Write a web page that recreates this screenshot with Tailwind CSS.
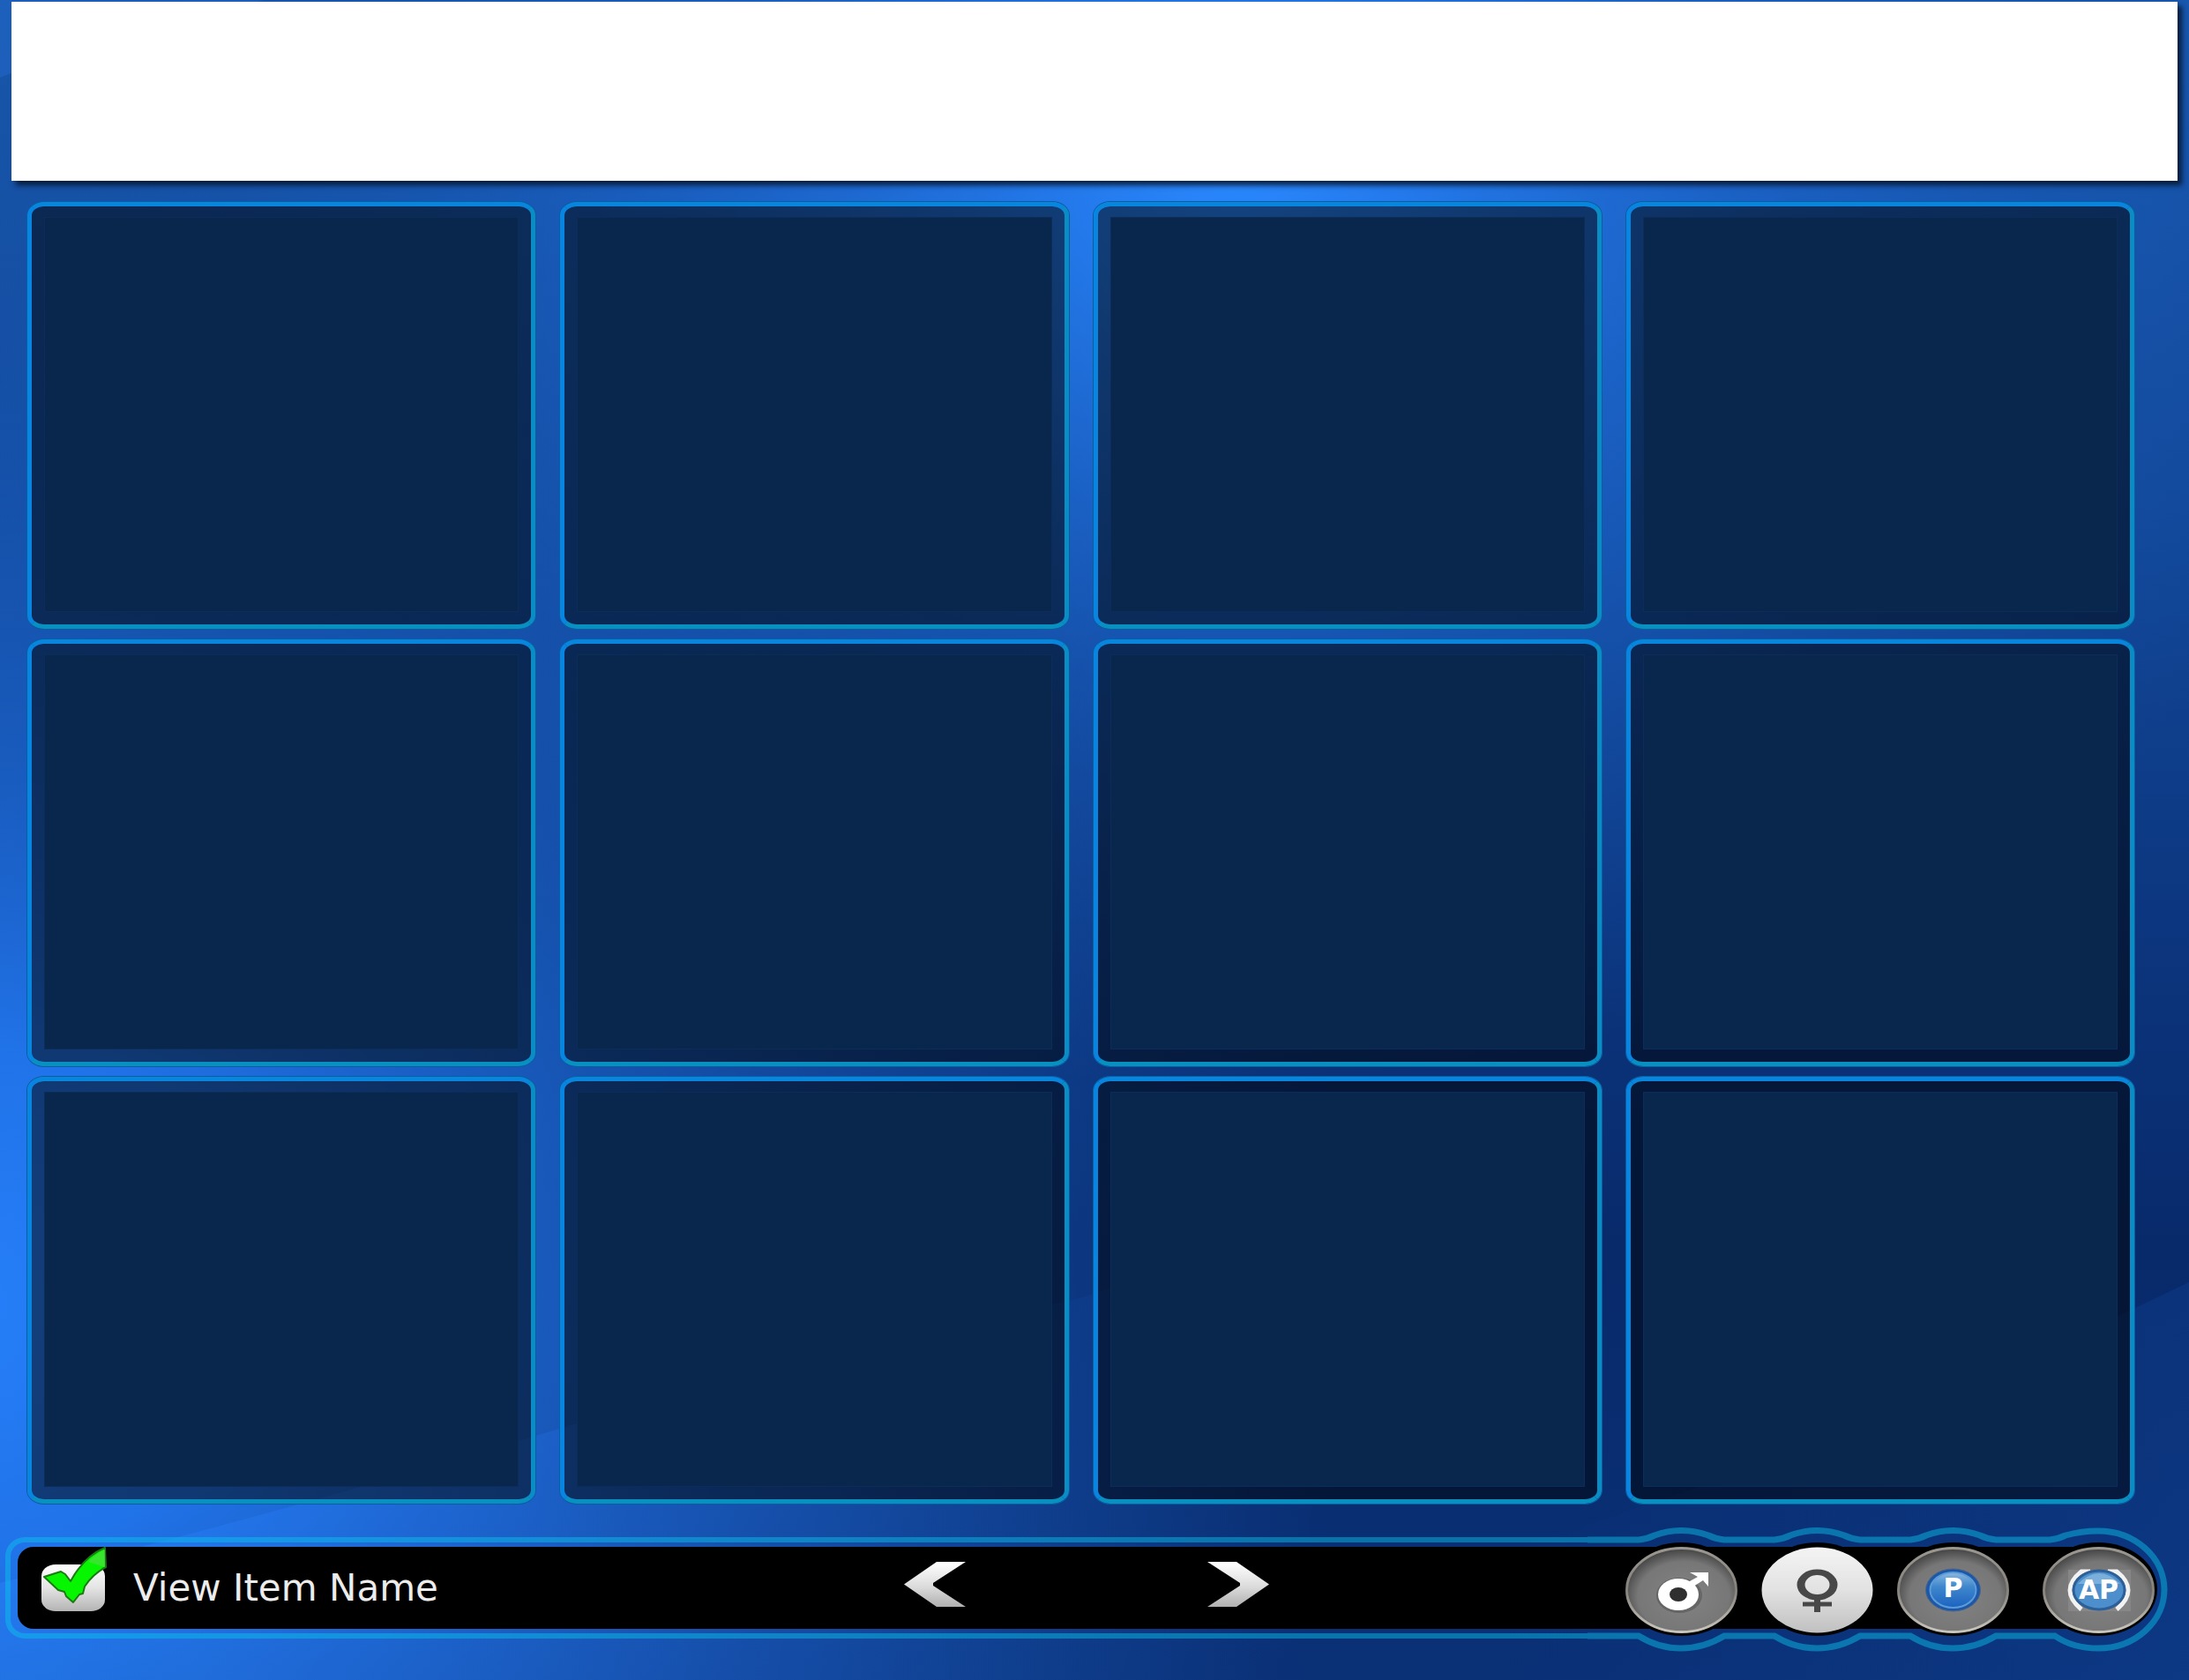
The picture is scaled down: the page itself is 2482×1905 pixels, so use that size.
<!DOCTYPE html>
<html lang="en">
<head>
<meta charset="utf-8">
<title>Item Browser</title>
<script src="https://cdn.jsdelivr.net/npm/@tailwindcss/browser@4"></script>
</head>
<body class="relative isolate flex min-h-screen flex-col overflow-x-hidden bg-[#0a3078] font-['DejaVu_Sans',Verdana,sans-serif]">

<!-- Blue swoosh backdrop -->
<svg class="absolute inset-0 -z-10 h-full w-full" viewBox="0 0 2482 1905" preserveAspectRatio="none" aria-hidden="true">
  <defs>
    <radialGradient id="glowTop" gradientUnits="userSpaceOnUse" cx="0" cy="0" r="1" gradientTransform="translate(1400 180) scale(1350 1050)">
      <stop offset="0" stop-color="#2a8aff"/><stop offset=".15" stop-color="#257df2" stop-opacity=".9"/><stop offset=".5" stop-color="#1c66d0" stop-opacity=".55"/><stop offset="1" stop-color="#1552ac" stop-opacity="0"/>
    </radialGradient>
    <radialGradient id="glowLeft" gradientUnits="userSpaceOnUse" cx="0" cy="0" r="1" gradientTransform="translate(-60 1480) scale(1600 1350)">
      <stop offset="0" stop-color="#2680fa"/><stop offset=".22" stop-color="#2276ee" stop-opacity=".95"/><stop offset=".5" stop-color="#1c66d0" stop-opacity=".65"/><stop offset="1" stop-color="#1552ac" stop-opacity="0"/>
    </radialGradient>
    <linearGradient id="base" x1="0" y1="0" x2="0" y2="1">
      <stop offset="0" stop-color="#1857ac"/><stop offset=".3" stop-color="#124899"/><stop offset=".55" stop-color="#0c367f"/><stop offset=".74" stop-color="#082a6b"/><stop offset="1" stop-color="#0a3076"/>
    </linearGradient>
    <linearGradient id="swoosh" gradientUnits="userSpaceOnUse" x1="0" y1="0" x2="1500" y2="0">
      <stop offset="0" stop-color="#2a86ff" stop-opacity=".4"/><stop offset=".5" stop-color="#2a7cff" stop-opacity=".16"/><stop offset="1" stop-color="#2a7cff" stop-opacity="0"/>
    </linearGradient>
    <linearGradient id="swooshRight" gradientUnits="userSpaceOnUse" x1="1700" y1="0" x2="2482" y2="0">
      <stop offset="0" stop-color="#1a60c8" stop-opacity="0"/><stop offset="1" stop-color="#1a60c8" stop-opacity=".16"/>
    </linearGradient>
  </defs>
  <rect width="2482" height="1905" fill="url(#base)"/>
  <rect width="2482" height="1905" fill="url(#glowTop)"/>
  <rect width="2482" height="1905" fill="url(#glowLeft)"/>
  <path d="M0 0H300Q120 40 0 88Z" fill="#2a78e0" fill-opacity=".3"/>
  <path d="M0 1795Q320 1715 611 1627T1225 1472L1500 1380V1905H0Z" fill="url(#swoosh)"/>
  <path d="M1700 1905V1760Q2100 1640 2482 1454V1905Z" fill="url(#swooshRight)"/>
</svg>

<header class="mx-[13px] mt-0.5 h-[203px] bg-white shadow-[5px_5px_6px_rgba(6,22,48,0.9)]"></header>

<main class="mt-[23px] grid flex-1 grid-cols-4 grid-rows-3 gap-x-[26px] gap-y-[10px] pr-[61px] pl-[30px]">
  <article class="min-h-60 rounded-[20px/16px] border border-[#0a5ea0]"><div class="h-full rounded-[19px/15px] border-[5px] border-t-[#0885dc] border-r-[#0a8cc4] border-b-[#0890c0] border-l-[#0885e0] bg-black/50 bg-clip-padding px-[14px] pt-3 pb-[14px]"><div class="h-full border border-[#0c2d59] bg-[#09264d]"></div></div></article>
  <article class="min-h-60 rounded-[20px/16px] border border-[#0a5ea0]"><div class="h-full rounded-[19px/15px] border-[5px] border-t-[#0885dc] border-r-[#0a8cc4] border-b-[#0890c0] border-l-[#0885e0] bg-black/50 bg-clip-padding px-[14px] pt-3 pb-[14px]"><div class="h-full border border-[#0c2d59] bg-[#09264d]"></div></div></article>
  <article class="min-h-60 rounded-[20px/16px] border border-[#0a5ea0]"><div class="h-full rounded-[19px/15px] border-[5px] border-t-[#0885dc] border-r-[#0a8cc4] border-b-[#0890c0] border-l-[#0885e0] bg-black/50 bg-clip-padding px-[14px] pt-3 pb-[14px]"><div class="h-full border border-[#0c2d59] bg-[#09264d]"></div></div></article>
  <article class="min-h-60 rounded-[20px/16px] border border-[#0a5ea0]"><div class="h-full rounded-[19px/15px] border-[5px] border-t-[#0885dc] border-r-[#0a8cc4] border-b-[#0890c0] border-l-[#0885e0] bg-black/50 bg-clip-padding px-[14px] pt-3 pb-[14px]"><div class="h-full border border-[#0c2d59] bg-[#09264d]"></div></div></article>
  <article class="min-h-60 rounded-[20px/16px] border border-[#0a5ea0]"><div class="h-full rounded-[19px/15px] border-[5px] border-t-[#0885dc] border-r-[#0a8cc4] border-b-[#0890c0] border-l-[#0885e0] bg-black/50 bg-clip-padding px-[14px] pt-3 pb-[14px]"><div class="h-full border border-[#0c2d59] bg-[#09264d]"></div></div></article>
  <article class="min-h-60 rounded-[20px/16px] border border-[#0a5ea0]"><div class="h-full rounded-[19px/15px] border-[5px] border-t-[#0885dc] border-r-[#0a8cc4] border-b-[#0890c0] border-l-[#0885e0] bg-black/50 bg-clip-padding px-[14px] pt-3 pb-[14px]"><div class="h-full border border-[#0c2d59] bg-[#09264d]"></div></div></article>
  <article class="min-h-60 rounded-[20px/16px] border border-[#0a5ea0]"><div class="h-full rounded-[19px/15px] border-[5px] border-t-[#0885dc] border-r-[#0a8cc4] border-b-[#0890c0] border-l-[#0885e0] bg-black/50 bg-clip-padding px-[14px] pt-3 pb-[14px]"><div class="h-full border border-[#0c2d59] bg-[#09264d]"></div></div></article>
  <article class="min-h-60 rounded-[20px/16px] border border-[#0a5ea0]"><div class="h-full rounded-[19px/15px] border-[5px] border-t-[#0885dc] border-r-[#0a8cc4] border-b-[#0890c0] border-l-[#0885e0] bg-black/50 bg-clip-padding px-[14px] pt-3 pb-[14px]"><div class="h-full border border-[#0c2d59] bg-[#09264d]"></div></div></article>
  <article class="min-h-60 rounded-[20px/16px] border border-[#0a5ea0]"><div class="h-full rounded-[19px/15px] border-[5px] border-t-[#0885dc] border-r-[#0a8cc4] border-b-[#0890c0] border-l-[#0885e0] bg-black/50 bg-clip-padding px-[14px] pt-3 pb-[14px]"><div class="h-full border border-[#0c2d59] bg-[#09264d]"></div></div></article>
  <article class="min-h-60 rounded-[20px/16px] border border-[#0a5ea0]"><div class="h-full rounded-[19px/15px] border-[5px] border-t-[#0885dc] border-r-[#0a8cc4] border-b-[#0890c0] border-l-[#0885e0] bg-black/50 bg-clip-padding px-[14px] pt-3 pb-[14px]"><div class="h-full border border-[#0c2d59] bg-[#09264d]"></div></div></article>
  <article class="min-h-60 rounded-[20px/16px] border border-[#0a5ea0]"><div class="h-full rounded-[19px/15px] border-[5px] border-t-[#0885dc] border-r-[#0a8cc4] border-b-[#0890c0] border-l-[#0885e0] bg-black/50 bg-clip-padding px-[14px] pt-3 pb-[14px]"><div class="h-full border border-[#0c2d59] bg-[#09264d]"></div></div></article>
  <article class="min-h-60 rounded-[20px/16px] border border-[#0a5ea0]"><div class="h-full rounded-[19px/15px] border-[5px] border-t-[#0885dc] border-r-[#0a8cc4] border-b-[#0890c0] border-l-[#0885e0] bg-black/50 bg-clip-padding px-[14px] pt-3 pb-[14px]"><div class="h-full border border-[#0c2d59] bg-[#09264d]"></div></div></article>
</main>

<footer class="relative mt-[26px] mb-8 grid h-[141px] grid-cols-[1fr_auto_1fr] items-center pr-[39px] pl-[20px]">
  <!-- Bar frame: stretching left part, fixed right part with a bump round each button -->
  <div class="absolute top-[11px] right-[682px] left-1.5 -z-10 h-[115px] rounded-l-[22px] border-[6px] border-r-0 border-[#0ac8ee]/45"></div>
  <div class="absolute top-[22px] right-[682px] left-[20px] -z-10 h-[93px] rounded-l-[18px] bg-black"></div>
  <svg class="absolute top-0 right-0 -z-10 h-[141px] w-[682px]" viewBox="0 0 682 141" aria-hidden="true">
    <path d="M0 14H58Q68 13 76 9Q106 -2 137 9Q145 13 155 14H212Q222 13 230 9Q260 -2 291 9Q299 13 309 14H366Q376 13 384 9Q414 -2 445 9Q453 13 463 14H524Q534 13 542 9Q560 4 579 4A75 66.500 0 0 1 579 137Q550 137 530 123H463Q440 137 414 137T366 123H309Q286 137 260 137T212 123H155Q132 137 106 137T58 123H0" fill="none" stroke="#0ac8ee" stroke-opacity=".45" stroke-width="7"/>
    <path d="M0 22H579V115H0Z"/>
    <ellipse cx="106.500" cy="70" rx="68" ry="53"/><ellipse cx="260.500" cy="70" rx="68" ry="53"/><ellipse cx="414.500" cy="70" rx="68" ry="53"/><ellipse cx="579" cy="70" rx="67" ry="53"/>
  </svg>

  <label class="mb-1 flex items-center gap-8 pl-[27px]">
    <span class="relative h-[53px] w-[72px]">
      <input type="checkbox" checked class="block h-full w-full appearance-none rounded-[16px/13px] bg-linear-to-b from-white via-[#e4e4e4] to-[#b4b4b4]">
      <svg class="pointer-events-none absolute bottom-2 left-[2px] h-[66px] w-[74px]" viewBox="0 0 74 66" aria-hidden="true">
        <path d="M1 35L20 29L25 32L31 40Q46 12 70 2L71 24Q56 32 47 46L45 54L41 55L34 64L26 57L24 52L17 50Z" fill="#06f600" stroke="#1c7a14" stroke-width="2" stroke-linejoin="round"/>
        <path d="M70 4Q58 10 51 18L70 24Z" fill="#5bd84c" fill-opacity=".6"/>
      </svg>
    </span>
    <span class="text-[42px] leading-none text-[#ececec]">View Item Name</span>
  </label>

  <nav class="mb-[12px] flex gap-[274px]" aria-label="Pages">
    <button type="button" aria-label="Previous page"><svg class="block h-[51px] w-[70px]" viewBox="0 0 70 51"><defs><linearGradient id="metal" x1="0" y1="0" x2="0" y2="1"><stop offset="0" stop-color="#fff"/><stop offset=".55" stop-color="#dcdcdc"/><stop offset="1" stop-color="#b0b0b0"/></linearGradient></defs><path d="M37 0H70L33 24V27L70 51H37L0 25.500Z" fill="url(#metal)"/></svg></button>
    <button type="button" aria-label="Next page"><svg class="block h-[51px] w-[70px]" viewBox="0 0 70 51"><path d="M33 0H0L37 24V27L0 51H33L70 25.500Z" fill="url(#metal)"/></svg></button>
  </nav>

  <div class="flex items-center justify-end gap-[27px]">
    <button type="button" aria-label="Male"><svg class="block h-[98px] w-[127px]" viewBox="0 0 127 98">
      <defs><radialGradient id="disc" cx=".52" cy=".58" r=".56"><stop offset="0" stop-color="#838383"/><stop offset=".75" stop-color="#777"/><stop offset="1" stop-color="#484848"/></radialGradient>
      <linearGradient id="rim" x1="0" y1="0" x2="0" y2="1"><stop offset="0" stop-color="#9a9890"/><stop offset=".5" stop-color="#85827b"/><stop offset="1" stop-color="#c9c6be"/></linearGradient></defs>
      <ellipse cx="63.500" cy="49" rx="62" ry="47.500" fill="url(#disc)" stroke="url(#rim)" stroke-width="3"/>
      <ellipse cx="61" cy="55" rx="26" ry="20" fill="#3a3a3a" fill-opacity=".35"/>
      <ellipse cx="60" cy="54" rx="23" ry="18" fill="#fff"/><ellipse cx="60" cy="54" rx="10" ry="8" fill="#2f2f2f"/>
      <path d="M71 40L82 34L73 29H94V45L88 38L77 45Z" fill="#fff"/></svg></button>
    <button type="button" aria-label="Female" aria-pressed="true"><svg class="block h-[98px] w-[127px]" viewBox="0 0 127 98">
      <defs><linearGradient id="lit" x1="0" y1="0" x2="0" y2="1"><stop offset="0" stop-color="#f4f4f4"/><stop offset=".5" stop-color="#e2e2e2"/><stop offset="1" stop-color="#c0c0c0"/></linearGradient></defs>
      <ellipse cx="63.500" cy="49" rx="63" ry="48.500" fill="url(#lit)"/>
      <g fill="none" stroke="#484848"><path d="M63.500 58V74" stroke-width="7"/><path d="M47 65H80" stroke-width="5"/></g>
      <path fill-rule="evenodd" d="M40.500 43A23 17.500 0 1 1 86.500 43A23 17.500 0 1 1 40.500 43ZM49.500 43A14 11 0 1 0 77.500 43A14 11 0 1 0 49.500 43Z" fill="#484848"/></svg></button>
    <button type="button" class="relative" aria-label="P"><svg class="block h-[98px] w-[127px]" viewBox="0 0 127 98">
      <defs><linearGradient id="blue" x1="0" y1="0" x2="0" y2="1"><stop offset="0" stop-color="#8ab8e0"/><stop offset=".4" stop-color="#3f88cc"/><stop offset="1" stop-color="#1c62c0"/></linearGradient></defs>
      <ellipse cx="63.500" cy="49" rx="62" ry="47.500" fill="url(#disc)" stroke="url(#rim)" stroke-width="3"/>
      <ellipse cx="63.500" cy="49" rx="31" ry="24" fill="#1d57a8" stroke="#4a6688" stroke-width="1"/><ellipse cx="63.500" cy="49" rx="26" ry="20" fill="url(#blue)" stroke="#5b9bd8" stroke-width="2"/></svg>
      <span class="absolute inset-0 flex items-center justify-center pb-1 text-[30px] leading-none font-bold text-white">P</span></button>
    <button type="button" class="relative ml-[11px]" aria-label="AP"><svg class="block h-[98px] w-[127px]" viewBox="0 0 127 98">
      <ellipse cx="63.500" cy="49" rx="62" ry="47.500" fill="url(#disc)" stroke="url(#rim)" stroke-width="3"/>
      <path d="M29 26H100V73H29Z" fill="#868686"/>
      <path d="M54 28H44Q18 49 44 71M74 28H84Q110 49 84 71" fill="none" stroke="#f2f2f2" stroke-width="5"/>
      <ellipse cx="64" cy="49" rx="29" ry="22" fill="#4c8fcc" stroke="#2d5f98" stroke-width="3"/><path d="M40 42Q64 18 88 42Z" fill="#a8cdea" fill-opacity=".5"/></svg>
      <span class="absolute inset-0 flex items-center justify-center text-[30px] leading-none font-bold text-white">AP</span></button>
  </div>
</footer>
</body>
</html>
